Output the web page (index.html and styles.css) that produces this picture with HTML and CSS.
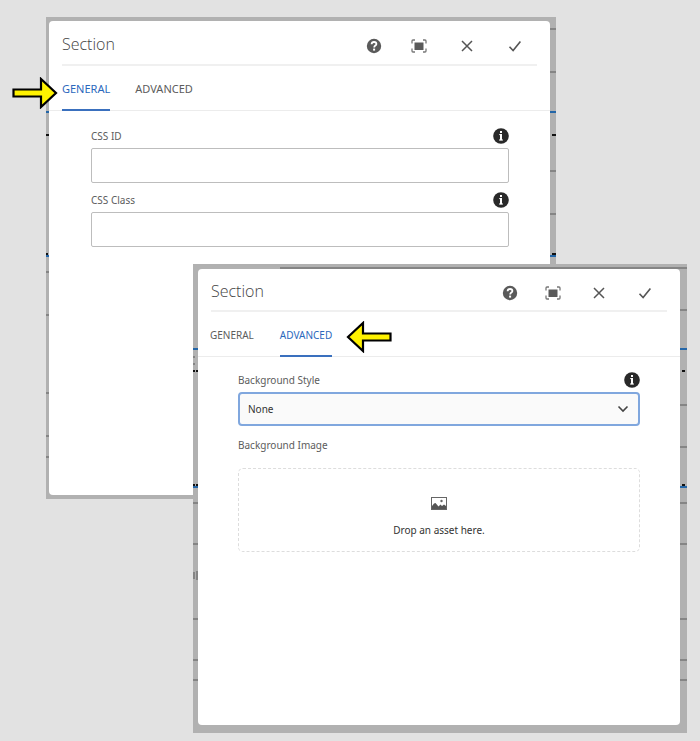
FILE: index.html
```html
<!DOCTYPE html>
<html lang="en">
<head>
<meta charset="utf-8">
<title>Section dialog</title>
<link rel="stylesheet" href="styles.css">
</head>
<body>
<svg class="sprite" aria-hidden="true">
  <symbol id="help" viewBox="0 0 16 16"><circle cx="8" cy="8" r="7.2" fill="#5a5a5a"/><path d="M5.6 6.2C5.7 4.7 6.7 4 8 4s2.4.8 2.4 2c0 1.600-2.200 1.600-2.200 3.400" fill="none" stroke="#fff" stroke-width="1.8"/><rect x="7.1" y="10.6" width="2" height="2" fill="#fff"/></symbol>
  <symbol id="full" viewBox="0 0 16 16"><rect x="3.500" y="4.500" width="9" height="7.500" fill="#5a5a5a"/><path d="M1 5.500V3q0-1 1-1h2M12 2h2q1 0 1 1v2.500M15 10.500V13q0 1-1 1h-2M4 14H2q-1 0-1-1v-2.500" fill="none" stroke="#777" stroke-width="1.300"/></symbol>
  <symbol id="close" viewBox="0 0 16 16"><path d="M3 3l10 10M13 3L3 13" fill="none" stroke="#555" stroke-width="1.5"/></symbol>
  <symbol id="check" viewBox="0 0 16 16"><path d="M2.5 8.800l3.600 3.800L13.400 3.400" fill="none" stroke="#555" stroke-width="1.6"/></symbol>
  <symbol id="info" viewBox="0 0 16 16"><circle cx="8" cy="8" r="7.8" fill="#292929"/><path d="M6.200 6.600h2.500M6 12h4" fill="none" stroke="#fff" stroke-width="1"/><path d="M8 6.100v6.200" stroke="#fff" stroke-width="2"/><rect x="7" y="3" width="2" height="2" fill="#fff"/></symbol>
  <symbol id="arrow" viewBox="0 0 46 32"><path d="M1.500 12.500H29V2L44 16 29 30V19.500H1.500Z" fill="#fff200" stroke="#000" stroke-width="2.200"/></symbol>
</svg>
<main class="scene">
  <section class="window window-general">
    <svg class="backdrop" aria-hidden="true">
      <g class="gray"><path d="M500 12h100M500 55h100M500 154h100M500 197h100M0 255h3M0 298h3M0 376h3M0 419h3M0 440h3"/></g>
      <g class="blue"><path d="M0 95h600M0 239h600"/></g>
      <g class="black"><path d="M0 118h3M506 118h4M0 237h2M506 237h4"/></g>
    </svg>
    <div class="panel">
      <header class="head">
        <h2>Section</h2>
        <div class="actions">
          <button class="help" aria-label="Help"><svg><use href="#help"/></svg></button>
          <button aria-label="Full screen"><svg><use href="#full"/></svg></button>
          <button aria-label="Close"><svg><use href="#close"/></svg></button>
          <button aria-label="Done"><svg><use href="#check"/></svg></button>
        </div>
      </header>
      <nav class="tabs">
        <button class="tab active">GENERAL<svg class="pointer pointer-left" aria-hidden="true"><use href="#arrow"/></svg></button>
        <button class="tab">ADVANCED</button>
      </nav>
      <form class="fields">
        <div class="label-row"><label for="css-id">CSS ID</label><svg class="info"><use href="#info"/></svg></div>
        <input id="css-id" type="text">
        <div class="label-row"><label for="css-class">CSS Class</label><svg class="info"><use href="#info"/></svg></div>
        <input id="css-class" type="text">
      </form>
    </div>
  </section>

  <section class="window window-advanced">
    <svg class="backdrop" aria-hidden="true">
      <g class="gray"><path d="M87 4h600M400 46h300M400 141h300M400 183h300M0 239h700M0 280h700M0 355h700M0 396h700M0 416h700M0 93h2M0 100h2"/></g>
      <g class="blue"><path d="M0 85h700M0 223h700"/></g>
      <g class="black"><path d="M0 107h2M3 107h2M489 107h3M0 221h2M3 221h2M489 221h3"/></g>
      <g class="gray"><path d="M1 308v7M4 307v9"/></g>
    </svg>
    <div class="panel">
      <header class="head">
        <h2>Section</h2>
        <div class="actions">
          <button class="help" aria-label="Help"><svg><use href="#help"/></svg></button>
          <button aria-label="Full screen"><svg><use href="#full"/></svg></button>
          <button aria-label="Close"><svg><use href="#close"/></svg></button>
          <button aria-label="Done"><svg><use href="#check"/></svg></button>
        </div>
      </header>
      <nav class="tabs">
        <button class="tab">GENERAL</button>
        <button class="tab active">ADVANCED<svg class="pointer pointer-right" aria-hidden="true"><use href="#arrow"/></svg></button>
      </nav>
      <form class="fields">
        <div class="label-row"><label for="bg-style">Background Style</label><svg class="info"><use href="#info"/></svg></div>
        <div class="select">
          <select id="bg-style"><option>None</option></select>
          <svg class="chevron" viewBox="0 0 12 8" aria-hidden="true"><path d="M1.500 1.500L6 6l4.500-4.500" fill="none" stroke="#444" stroke-width="1.600"/></svg>
        </div>
        <div class="label-row"><span>Background Image</span></div>
        <div class="drop">
          <svg class="image" viewBox="0 0 16 13" aria-hidden="true"><rect x=".5" y=".5" width="15" height="12" fill="#fff" stroke="#666"/><path d="M1 9l2-2.500 1.500-.5 3 3.500 2-2 1.500 1.500 2-1.500L15 9v3H1Z" fill="#555"/><circle cx="10.500" cy="4" r="1.200" fill="#666"/></svg>
          <span>Drop an asset here.</span>
        </div>
      </form>
    </div>
  </section>
</main>
</body>
</html>
```
FILE: styles.css
```css
* { box-sizing: border-box; }
body {
  margin: 0;
  background: #e2e2e2;
  color: #5c5c5c;
  font: 10px/16px "Noto Sans", "Open Sans", sans-serif;
}
.sprite { position: absolute; width: 0; height: 0; }
.scene {
  display: grid;
  grid-template-columns: 46fr 147fr 363fr 131fr 13fr;
  grid-template-rows: 17px 247px 235px 234px 8px;
}
.window {
  position: relative;
  display: flex;
  background: #b1b1b1;
}
.window-general { grid-area: 2 / 2 / 4 / 4; padding: 4px 6px 4px 3px; }
.window-advanced { grid-area: 3 / 3 / 5 / 5; padding: 5px 7px 8px 5px; }
.backdrop { position: absolute; left: 0; top: 0; width: 100%; height: 100%; }
.backdrop g { stroke-width: 2; fill: none; }
.gray { stroke: #858585; }
.blue { stroke: #2466a8; }
.black { stroke: #111; }
.panel {
  position: relative;
  flex: 1;
  min-width: 0;
  background: #fff;
  border-radius: 4px;
}
.head {
  display: flex;
  align-items: center;
  justify-content: space-between;
  height: 45px;
  margin: 0 13px;
  border-bottom: 2px solid #f0f0f0;
}
h2 { margin: 0; padding-top: 2px; font: 300 16px/24px "Open Sans", sans-serif; color: #444; }
.actions { display: flex; gap: 32px; margin: 6px 14px 0 0; }
.help { margin-right: -3px; }
button {
  font: inherit;
  color: inherit;
  padding: 0;
  border: 0;
  background: none;
}
.actions button { width: 16px; height: 16px; }
.actions svg { display: block; width: 16px; height: 16px; }
.tabs {
  display: flex;
  gap: 25px;
  height: 45px;
  padding: 0 13px;
  border-bottom: 1px solid #ececec;
  font-size: 11px;
}
.tab {
  position: relative;
  height: 45px;
  padding: 4px 0 2px;
  border-bottom: 2px solid transparent;
}
.active { color: #2b68bd; border-color: #3a70be; }
.pointer { position: absolute; width: 46px; height: 32px; top: 11px; }
.pointer-left { right: 100%; margin-right: 4px; }
.pointer-right { left: 100%; margin-left: 14px; transform: scaleX(-1); }
.fields { padding: 16px 41px 0 42px; }
.label-row {
  display: flex;
  align-items: center;
  justify-content: space-between;
  height: 18px;
  margin-bottom: 3px;
}
.info { width: 16px; height: 16px; }
input {
  display: block;
  width: 100%;
  height: 35px;
  margin-bottom: 8px;
  padding: 0 8px;
  border: 1px solid #bdbdbd;
  border-radius: 2px;
  font: inherit;
}
.select { position: relative; margin-bottom: 10px; }
select {
  display: block;
  width: 100%;
  height: 34px;
  padding: 0 8px;
  appearance: none;
  border: 2px solid #80a7de;
  border-radius: 4px;
  background: #fafafa;
  color: #333;
  font: inherit;
}
.chevron { position: absolute; right: 11px; top: 13px; width: 12px; height: 8px; }
.window-advanced .head { height: 43px; }
.window-advanced .actions { gap: 30px; }
.window-advanced .tabs { gap: 26px; padding: 0 12px; font-size: 10px; }
.window-advanced .pointer { top: 9px; }
.window-advanced .fields { padding: 14px 40px 0; }
.drop {
  display: flex;
  flex-direction: column;
  align-items: center;
  gap: 12px;
  height: 84px;
  margin-top: 14px;
  padding-top: 28px;
  border: 1px dashed #ddd;
  border-radius: 5px;
  color: #333;
}
.image { width: 16px; height: 13px; }
```
